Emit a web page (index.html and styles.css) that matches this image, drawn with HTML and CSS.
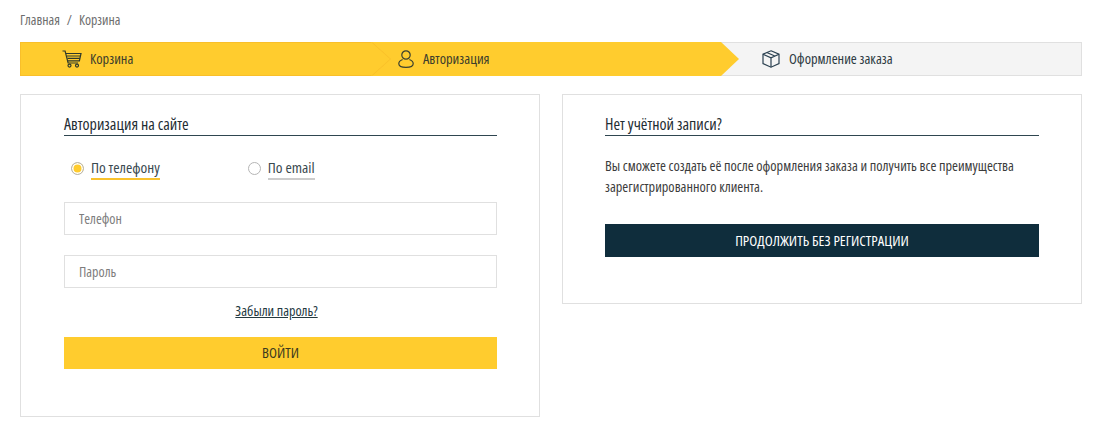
FILE: index.html
```html
<!DOCTYPE html>
<html lang="ru">
<head>
<meta charset="utf-8">
<title>Корзина</title>
<link rel="stylesheet" href="styles.css">
</head>
<body>
<nav class="crumbs"><a>Главная</a><span class="sep">/</span><a>Корзина</a></nav>
<ol class="steps">
  <li class="step step-done">
    <svg class="ico ico-cart" viewBox="0 0 20 18" fill="none" stroke="#2f3a2c" stroke-width="1.2"><path d="M.5 1h2.600l3 12h10"/><path d="M4 3.500h15l-1.600 7.300H5.800"/><path d="M5 6h13M5.500 8.400h12.400"/><circle cx="7.500" cy="15.600" r="1.500"/><circle cx="15" cy="15.600" r="1.500"/></svg>
    <span>Корзина</span>
  </li>
  <li class="step step-active">
    <svg class="ico ico-user" viewBox="0 0 18 18" fill="none" stroke="#3a4030" stroke-width="1.2"><circle cx="9" cy="5" r="4.200"/><path d="M5.600 9.500C3.300 10.400 1.800 12 1.800 13.800 1.800 16 4 17.400 9 17.400s7.200-1.400 7.200-3.600c0-1.800-1.500-3.400-3.800-4.300"/></svg>
    <span>Авторизация</span>
  </li>
  <li class="step step-next">
    <svg class="ico ico-box" viewBox="0 0 18 18" fill="none" stroke="#2a4050" stroke-width="1.2"><path d="M9 .8l8 3.400v9.400l-8 3.600-8-3.600V4.200z"/><path d="M1 4.200l8 3.600 8-3.600M9 7.800v9.400M4.800 2.500l8 3.500"/></svg>
    <span>Оформление заказа</span>
  </li>
</ol>
<main class="panels">
  <section class="panel panel-login">
    <h2 class="title">Авторизация на сайте</h2>
    <div class="tabs">
      <label class="tab tab-on"><i class="radio"></i><span class="tab-text">По телефону</span></label>
      <label class="tab"><i class="radio"></i><span class="tab-text">По email</span></label>
    </div>
    <input class="field" type="text" placeholder="Телефон">
    <input class="field" type="password" placeholder="Пароль">
    <a class="forgot">Забыли пароль?</a>
    <button class="btn btn-yellow" type="button">ВОЙТИ</button>
  </section>
  <section class="panel panel-guest">
    <h2 class="title">Нет учётной записи?</h2>
    <p class="note">Вы сможете создать её после оформления заказа и получить все преимущества зарегистрированного клиента.</p>
    <button class="btn btn-dark" type="button">ПРОДОЛЖИТЬ БЕЗ РЕГИСТРАЦИИ</button>
  </section>
</main>
</body>
</html>
```
FILE: styles.css
```css
* { box-sizing: border-box; }
html, body { margin: 0; }
body {
  padding: 0 18px 0 20px;
  background: #fff;
  color: #3c3c3c;
  font-family: "Open Sans", "Liberation Sans", sans-serif;
  font-stretch: 75%;
  font-size: 14.4px;
  line-height: 20px;
}
.crumbs { height: 42px; padding-top: 10px; color: #6d6d6d; font-size: 13.8px; }
.sep { margin: 0 7px; }
.steps { display: flex; margin: 0; padding: 0; list-style: none; height: 34px; }
.step { position: relative; display: flex; align-items: center; flex: 0 0 auto; height: 34px; color: #3d3d2c; }
.step-done { width: 352px; padding-left: 41px; background: #ffcc2e; border: 1px solid #f9bf2a; border-right: 0; }
.step-done::before,
.step-done::after {
  content: ""; position: absolute; z-index: 2; top: -1px; width: 19px; height: 34px;
  clip-path: polygon(0 0, 100% 50%, 0 100%);
}
.step-done::before { right: -19px; background: #f9bf2a; }
.step-done::after { right: -18px; background: #ffcc2e; }
.step-active { width: 349px; padding-left: 25px; background: #ffcc2e; }
.step-active::after {
  content: ""; position: absolute; z-index: 2; right: -18px; top: 0; width: 18px; height: 34px;
  background: #ffcc2e; clip-path: polygon(0 0, 100% 50%, 0 100%);
}
.step-next { flex: 1; padding-left: 41px; background: #f4f4f4; border: 1px solid #e0e0e0; border-left: 0; color: #2d3a42; }
.ico { flex: none; }
.ico-cart { width: 20px; height: 18px; margin-right: 8px; }
.ico-user { width: 18px; height: 18px; margin-right: 8px; }
.ico-box { width: 18px; height: 18px; margin-right: 9px; }
.panels { display: flex; align-items: flex-start; justify-content: space-between; margin-top: 18px; }
.panel { width: 520px; border: 1px solid #e0e0e0; background: #fff; }
.panel-login { height: 323px; padding: 19px 42px 0 43px; }
.panel-guest { height: 210px; padding: 19px 42px 0; }
.title { margin: 0; height: 22px; border-bottom: 1px solid #2f4650; color: #1f2d33; font-size: 16px; font-weight: 400; line-height: 20px; }
.tabs { display: flex; gap: 88px; padding: 22px 0 0 7px; height: 66px; }
.tab { display: flex; align-items: flex-start; height: 22px; gap: 7px; }
.radio { width: 13px; height: 13px; margin-top: 4px; border: 1px solid #b5b5b5; border-radius: 50%; background: #fff; }
.tab-on .radio { background: #ffcc2e; box-shadow: inset 0 0 0 1.5px #fff; }
.tab-text { height: 22px; border-bottom: 2px solid #ccc; font-size: 15.3px; line-height: 18px; color: #3a4a50; }
.tab-on .tab-text { border-bottom-color: #f9c22c; }
.field { display: block; width: 100%; height: 33px; margin-bottom: 20px; padding: 0 14px; border: 1px solid #e0e0e0; background: #fff; font: inherit; font-size: 14px; color: #333; outline: none; }
.field::placeholder { color: #7d7d7d; opacity: 1; }
.field + .field { margin-bottom: 12px; }
.forgot { display: block; padding-right: 8px; text-align: center; color: #24393f; font-size: 14.1px; text-decoration: underline; line-height: 22px; margin-bottom: 15px; }
.btn { display: block; width: 100%; border: 0; padding: 0 0 2px; font: inherit; cursor: pointer; }
.btn-yellow { height: 32px; background: #ffcc2e; color: #3c3a1f; font-size: 14.6px; }
.btn-dark { height: 33px; background: #0f2d3c; color: #fff; font-size: 14.7px; }
.note { margin: 19px 0 27px; line-height: 21px; font-size: 14.3px; color: #3c3c3c; }
```
